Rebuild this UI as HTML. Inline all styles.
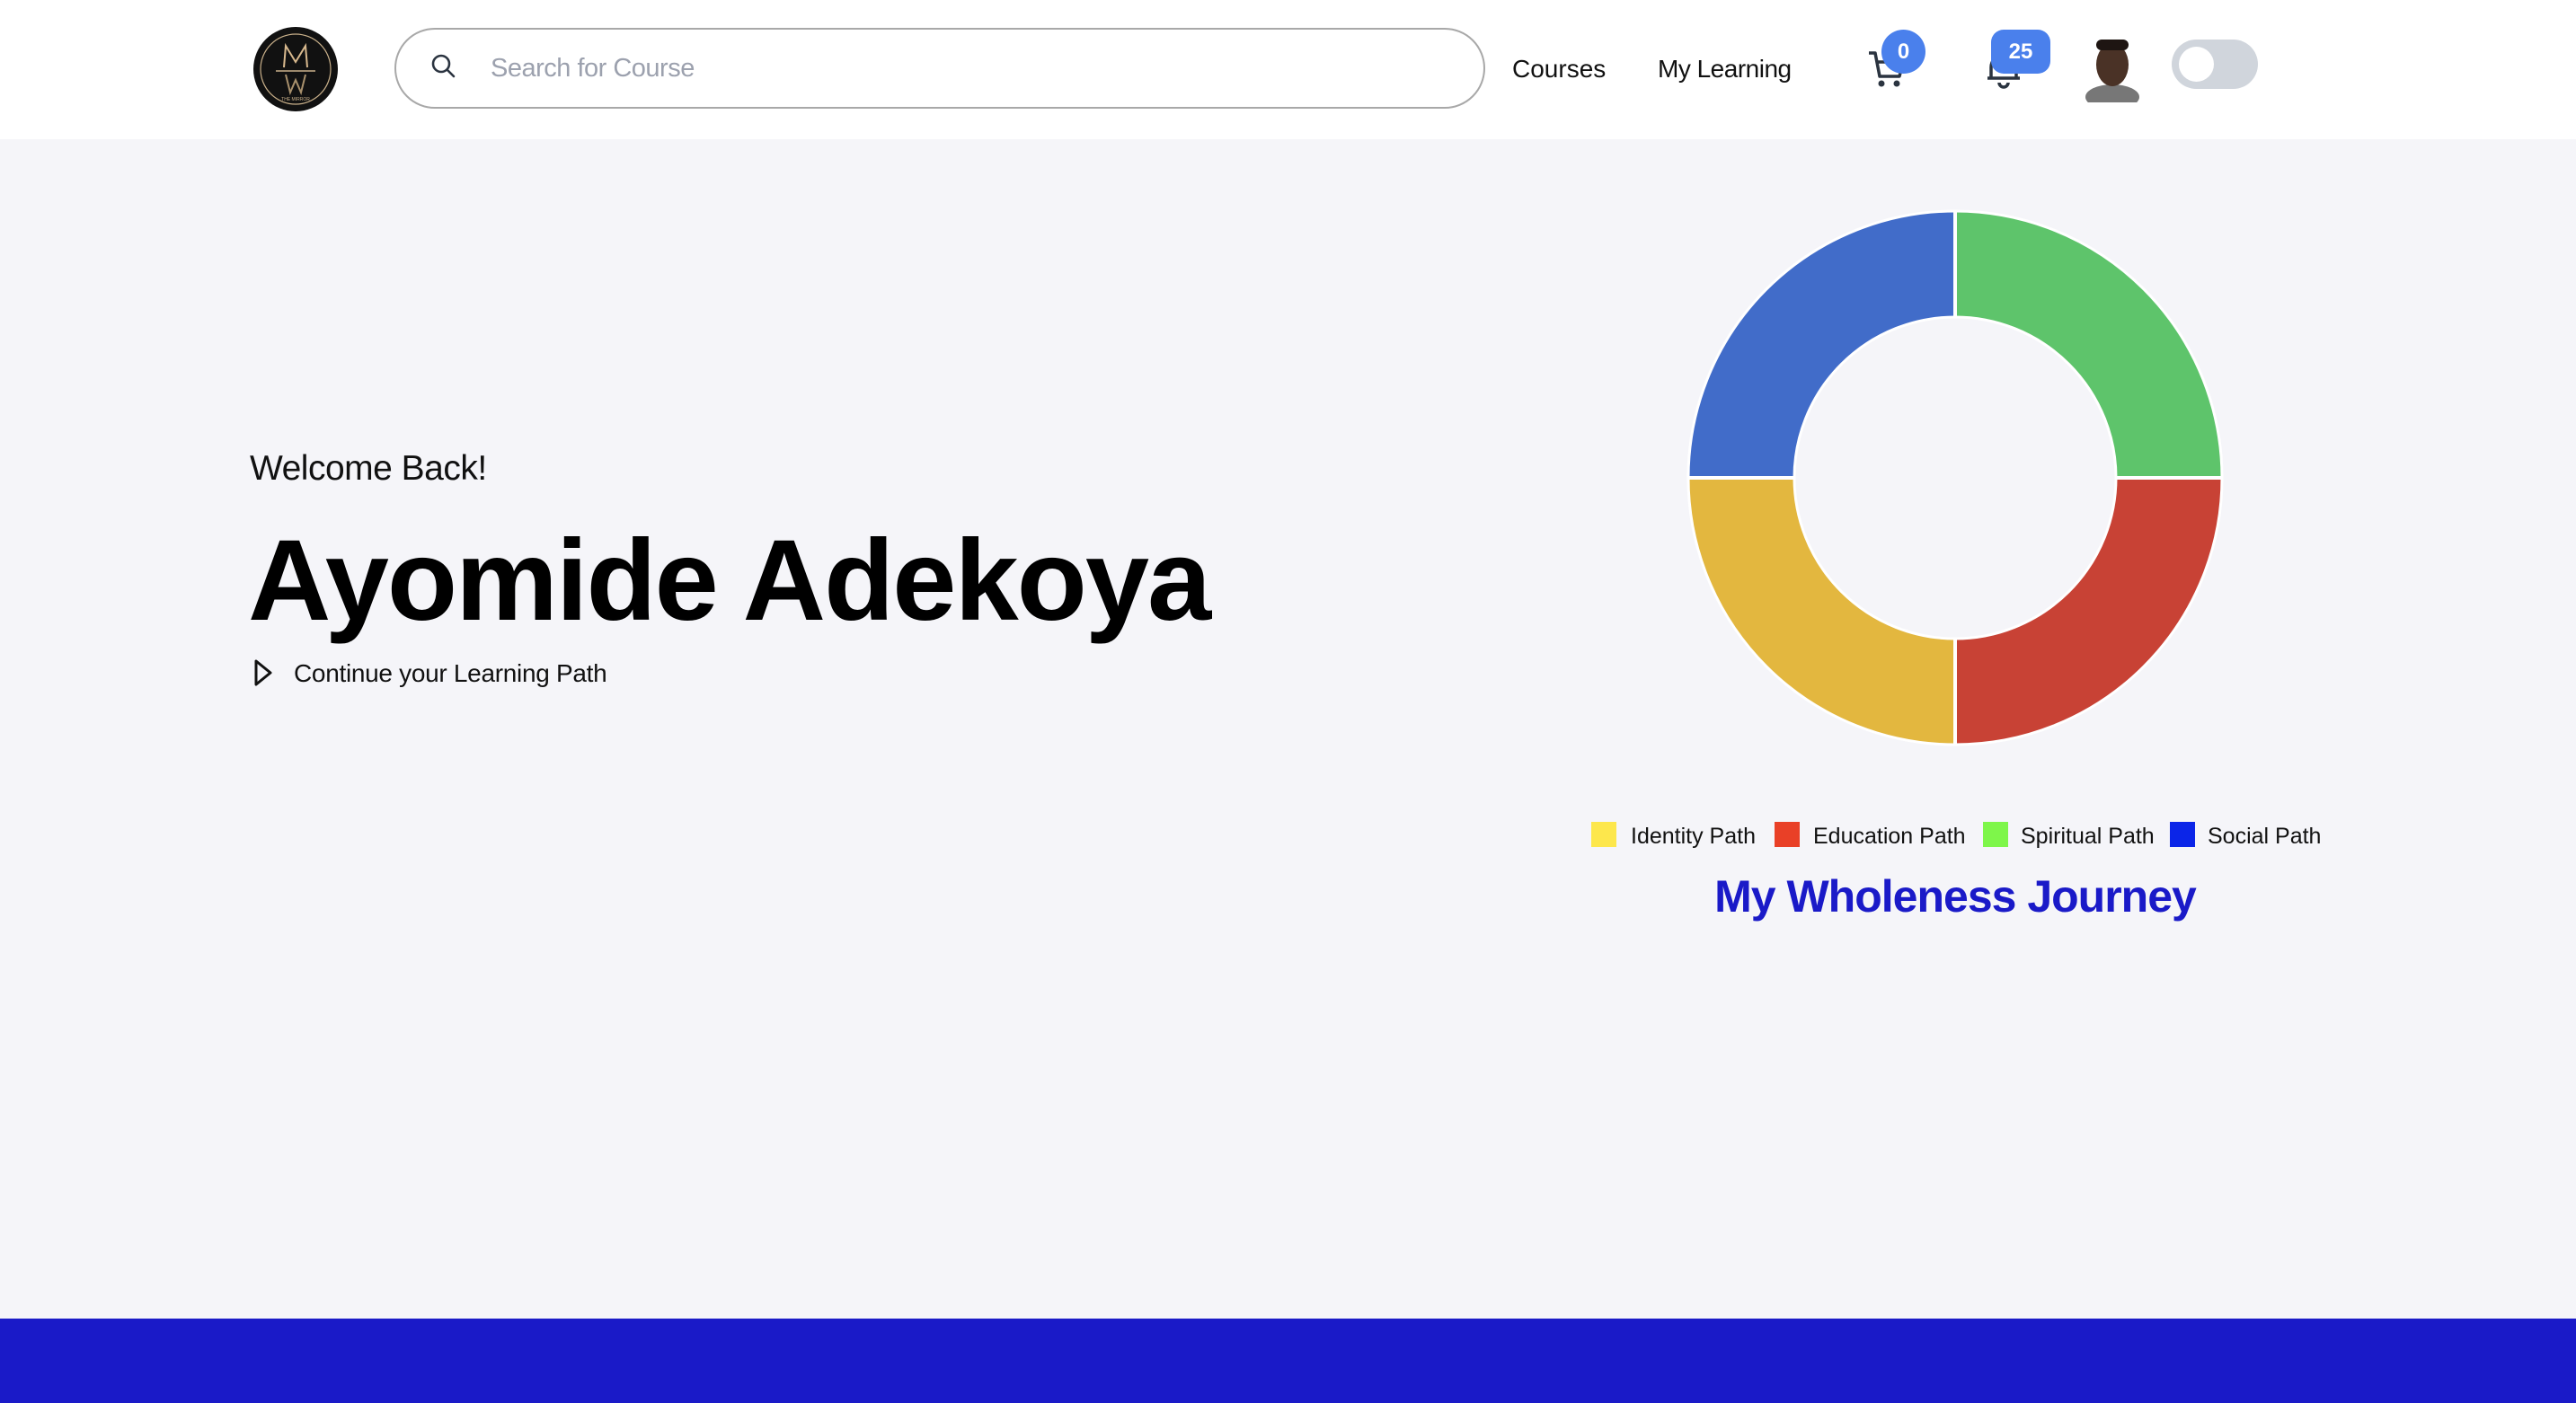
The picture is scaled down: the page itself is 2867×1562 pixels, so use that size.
<!DOCTYPE html>
<html><head><meta charset="utf-8"><style>
*{margin:0;padding:0;box-sizing:border-box}
body{width:2867px;height:1562px;overflow:hidden;background:#f5f5f9;font-family:"Liberation Sans",sans-serif;position:relative}
.hdr{position:absolute;left:0;top:0;width:2867px;height:155px;background:#fff}
.abs{position:absolute}
.footer{position:absolute;left:0;top:1468px;width:2867px;height:94px;background:#1a1ac8}
.badge{position:absolute;background:#4a80ec;color:#fff;font-weight:bold;font-size:24px;display:flex;align-items:center;justify-content:center;border-radius:25px;height:49px}
.leg{position:absolute;top:916px;font-size:25px;color:#111;line-height:30px}
.sq{position:absolute;top:915px;width:28px;height:28px}
</style></head><body>
<div class="hdr">
  <svg class="abs" style="left:281px;top:29px" width="96" height="96" viewBox="0 0 96 96">
    <circle cx="48" cy="48" r="47" fill="#111"/>
    <circle cx="48" cy="48" r="39" fill="none" stroke="#c9b08a" stroke-width="1.2"/>
    <path d="M35 46 L37 22 L48 40 L59 22 L61 46" fill="none" stroke="#d8b98e" stroke-width="2"/>
    <line x1="26" y1="50" x2="70" y2="50" stroke="#c9b08a" stroke-width="1.5"/>
    <path d="M37 54 L42 74 L48 60 L54 74 L59 54" fill="none" stroke="#a8906c" stroke-width="2"/>
    <text x="48" y="83" font-size="5" fill="#c9b08a" text-anchor="middle" font-family="Liberation Sans">THE MIRROR</text>
  </svg>
  <div class="abs" style="left:439px;top:31px;width:1214px;height:90px;border:2px solid #a8a8a8;border-radius:45px;background:#fff"></div>
  <svg class="abs" style="left:478px;top:58px" width="32" height="32" viewBox="0 0 32 32"><circle cx="13" cy="13" r="9" fill="none" stroke="#2b3440" stroke-width="2.6"/><line x1="20" y1="20" x2="27" y2="27" stroke="#2b3440" stroke-width="2.6" stroke-linecap="round"/></svg>
  <div class="abs" style="left:546px;top:60px;font-size:29px;color:#9ca1ae;letter-spacing:-0.5px">Search for Course</div>
  <div class="abs" style="left:1683px;top:61px;font-size:28px;color:#111">Courses</div>
  <div class="abs" style="left:1845px;top:61px;font-size:28px;color:#111;letter-spacing:-0.5px">My Learning</div>
  <svg class="abs" style="left:2078px;top:55px" width="44" height="44" viewBox="0 0 44 44"><path d="M2 4 H9 L14 30 H36 L40 14 H11" fill="none" stroke="#2b3440" stroke-width="3.5" stroke-linejoin="round"/><circle cx="16" cy="38" r="3.5" fill="#2b3440"/><circle cx="33" cy="38" r="3.5" fill="#2b3440"/></svg>
  <div class="badge" style="left:2094px;top:33px;width:49px">0</div>
  <svg class="abs" style="left:2208px;top:55px" width="44" height="44" viewBox="0 0 44 44"><path d="M8 32 V20 A14 14 0 0 1 36 20 V32 H40 M4 32 H40" fill="none" stroke="#2b3440" stroke-width="3.5"/><path d="M17 37 A5 5 0 0 0 27 37" fill="none" stroke="#2b3440" stroke-width="3.5"/></svg>
  <div class="badge" style="left:2216px;top:33px;width:66px;border-radius:14px">25</div>
  <svg class="abs" style="left:2316px;top:38px" width="70" height="76" viewBox="0 0 70 76"><ellipse cx="35" cy="70" rx="30" ry="14" fill="#777"/><ellipse cx="35" cy="34" rx="18" ry="24" fill="#4a3226"/><rect x="17" y="6" width="36" height="12" rx="6" fill="#1e1512"/></svg>
  <div class="abs" style="left:2417px;top:44px;width:96px;height:55px;border-radius:28px;background:#d0d5dc"></div>
  <div class="abs" style="left:2425px;top:52px;width:39px;height:39px;border-radius:50%;background:#fff"></div>
</div>

<div class="abs" style="left:278px;top:500px;font-size:39px;color:#111;letter-spacing:-0.5px">Welcome Back!</div>
<div class="abs" style="left:276px;top:572px;font-size:128px;font-weight:bold;color:#000;letter-spacing:-2px;line-height:150px">Ayomide Adekoya</div>
<svg class="abs" style="left:282px;top:733px" width="22" height="32" viewBox="0 0 22 32"><path d="M3 3 L19 16 L3 29 Z" fill="none" stroke="#111" stroke-width="3" stroke-linejoin="round"/></svg>
<div class="abs" style="left:327px;top:734px;font-size:28px;color:#111;letter-spacing:-0.3px">Continue your Learning Path</div>

<svg class="abs" style="left:1876px;top:232px" width="600" height="600" viewBox="-300 -300 600 600">
  <path d="M0 -297 A297 297 0 0 1 297 0 L179 0 A179 179 0 0 0 0 -179 Z" fill="#5ec46b"/>
  <path d="M297 0 A297 297 0 0 1 0 297 L0 179 A179 179 0 0 0 179 0 Z" fill="#c84235"/>
  <path d="M0 297 A297 297 0 0 1 -297 0 L-179 0 A179 179 0 0 0 0 179 Z" fill="#e3b73f"/>
  <path d="M-297 0 A297 297 0 0 1 0 -297 L0 -179 A179 179 0 0 0 -179 0 Z" fill="#416cc9"/>
  <line x1="0" y1="-298" x2="0" y2="298" stroke="#fff" stroke-width="4"/>
  <line x1="-298" y1="0" x2="298" y2="0" stroke="#fff" stroke-width="4"/>
  <circle r="179" fill="#f5f5f9" stroke="#fff" stroke-width="3"/>
  <circle r="297" fill="none" stroke="#fff" stroke-width="3"/>
</svg>

<div class="sq" style="left:1771px;background:#fde74c"></div><div class="leg" style="left:1815px">Identity Path</div>
<div class="sq" style="left:1975px;background:#e94027"></div><div class="leg" style="left:2018px">Education Path</div>
<div class="sq" style="left:2207px;background:#7ef64a"></div><div class="leg" style="left:2249px">Spiritual Path</div>
<div class="sq" style="left:2415px;background:#0b25e8"></div><div class="leg" style="left:2457px">Social Path</div>
<div class="abs" style="left:1776px;width:800px;text-align:center;top:969px;font-size:50px;font-weight:bold;color:#1a1ac8;letter-spacing:-1px">My Wholeness Journey</div>

<div class="footer"></div>
</body></html>
